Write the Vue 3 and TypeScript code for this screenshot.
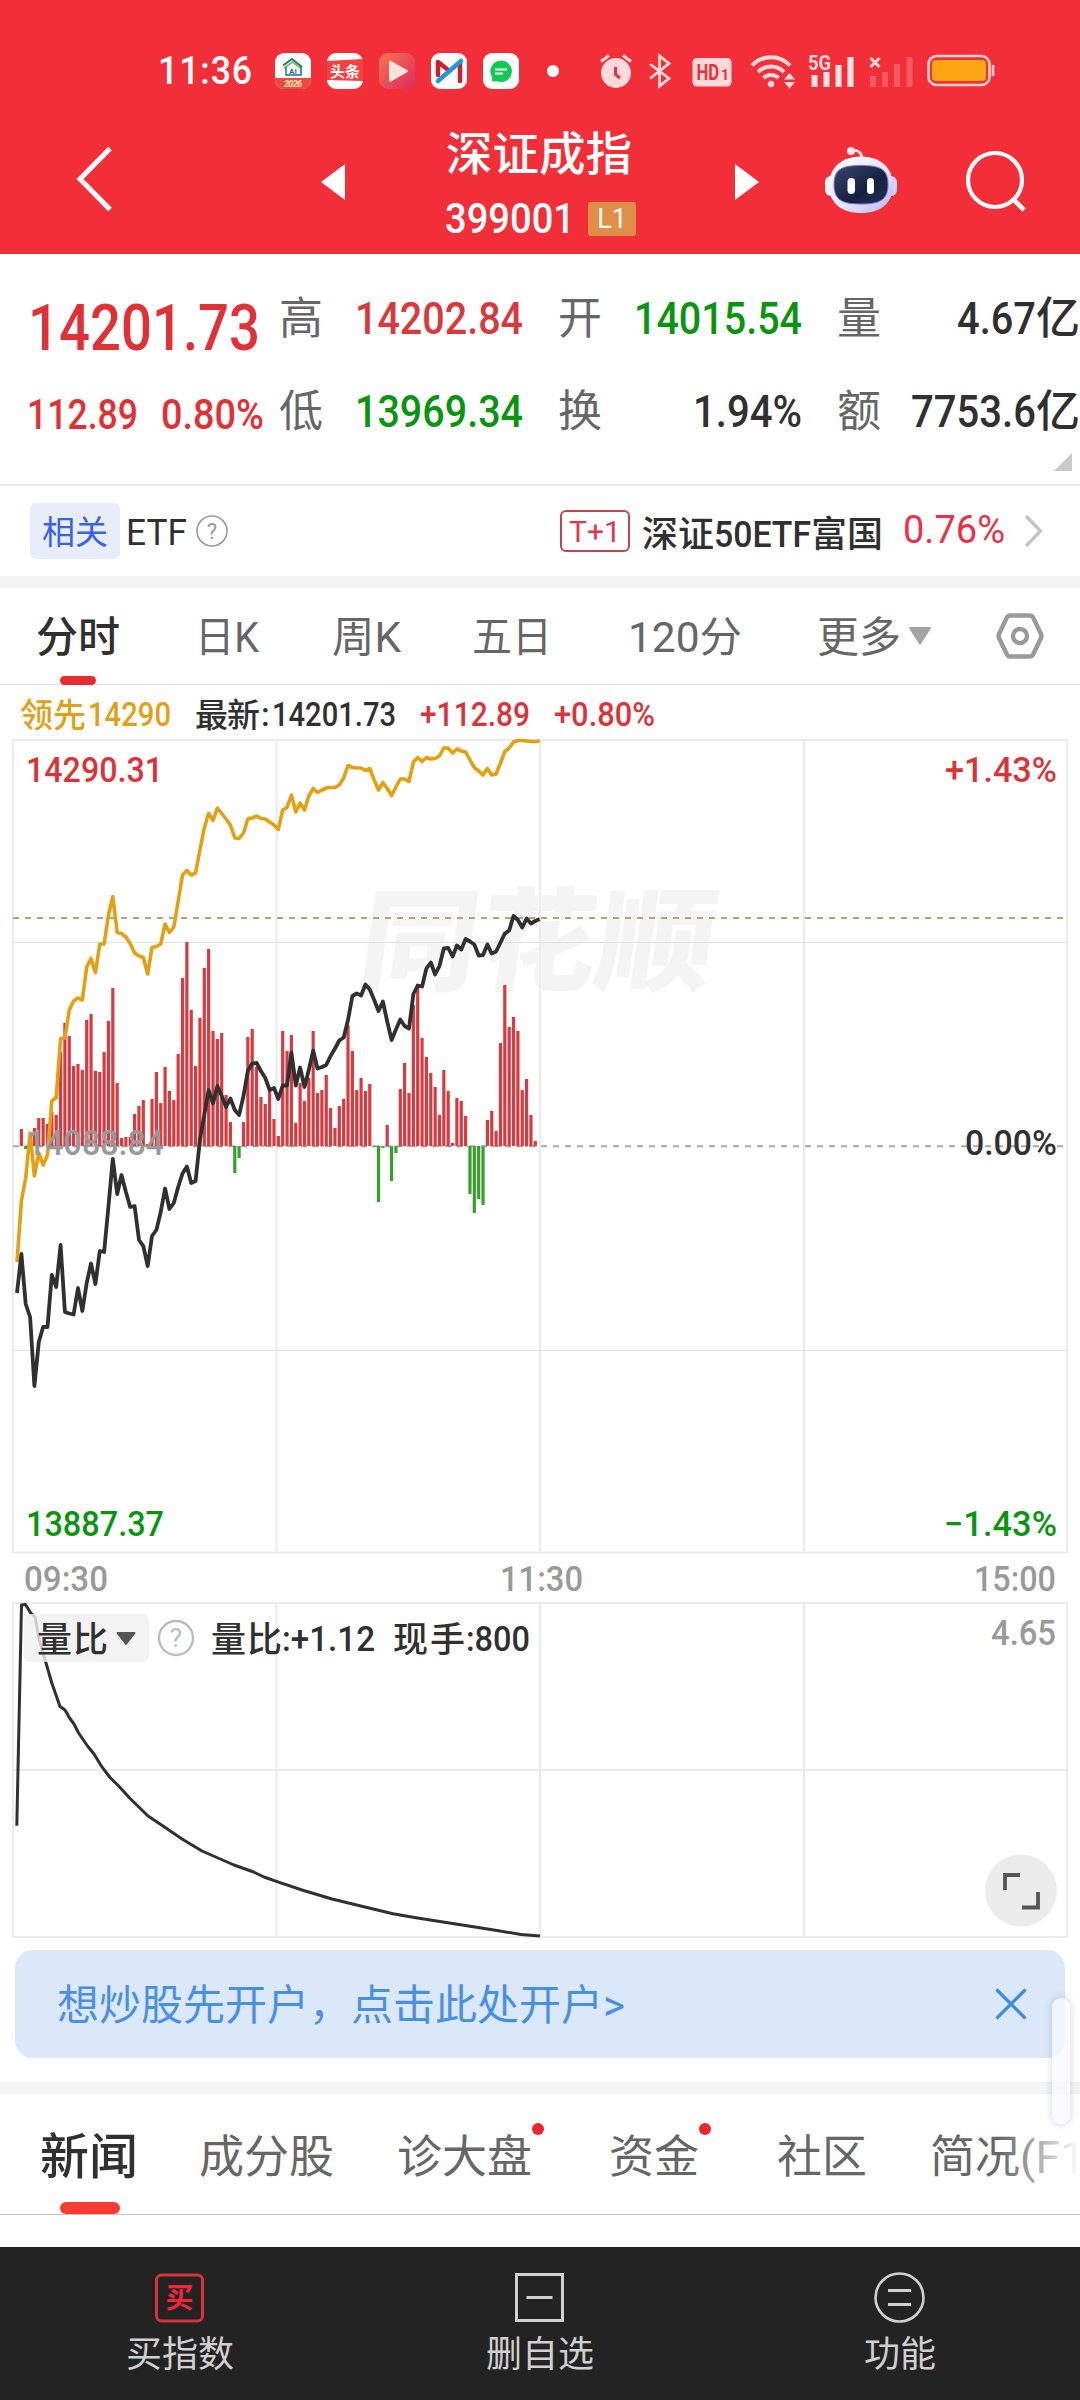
<script setup lang="ts">
import type { Directive } from 'vue'

// Squeezes a run of text horizontally so that it takes exactly the given width.
const vFit: Directive<HTMLElement, number> = {
  mounted(el, { value }) {
    const natural = el.getBoundingClientRect().width
    el.style.transform = `scaleX(${value / natural})`
    el.style.marginRight = `${value - natural}px`
  },
}

interface Quote {
  label: string
  value: string
  unit?: string
  tone: string
  width: number
}

const quotes: Quote[] = [
  { label: '高', value: '14202.84', tone: 'up', width: 168 },
  { label: '开', value: '14015.54', tone: 'down', width: 168 },
  { label: '量', value: '4.67', unit: '亿', tone: 'flat', width: 79 },
  { label: '低', value: '13969.34', tone: 'down', width: 168 },
  { label: '换', value: '1.94%', tone: 'flat', width: 109 },
  { label: '额', value: '7753.6', unit: '亿', tone: 'flat', width: 125 },
]

const periods = [
  { text: '日K', width: 64, cls: 'p-day' },
  { text: '周K', width: 69, cls: 'p-week' },
  { text: '五日', width: 80, cls: 'p-five' },
  { text: '120分', width: 114, cls: 'p-120' },
]

const step = 4.3555
const x0 = 17
const base = 1146

const lead: number[] = [
  1262, 1201, 1178, 1133, 1176, 1153, 1165, 1155, 1101, 1097.5, 1038.5, 1038, 1010, 1001, 998, 1000, 967, 958.5, 972.5, 944,
  944, 915, 896.5, 932.5, 933.5, 937, 943.5, 953, 956, 957.5, 974, 947.5, 946.5, 944, 924, 932.5, 927, 901, 875, 870.5,
  875, 873, 850, 828, 813.5, 820.5, 808, 813.5, 819, 825, 838, 838.5, 833, 819, 818, 816, 818.5, 819, 822, 825,
  829.5, 810, 807.5, 795, 812, 803, 810, 796, 788.5, 792.5, 790, 788, 787.5, 787.5, 785, 778, 765.5, 767.5, 768, 768,
  770.5, 768.5, 780, 790, 782.5, 788.5, 795.5, 787, 779, 779, 781.5, 762, 757.5, 761.5, 757.5, 759, 758.5, 756, 748, 748,
  753, 749, 751, 752, 760, 767.5, 771, 775, 768.5, 775, 774, 763, 751.5, 748, 742, 740.5, 740.5, 741, 741.5, 741.5, 741,
]

const price: number[] = [
  1293, 1254, 1304, 1317, 1386, 1342, 1327, 1327, 1275, 1287, 1245, 1312, 1313.5, 1314.5, 1288, 1311, 1283, 1263.5, 1284, 1251,
  1252, 1206, 1159, 1194, 1175, 1192, 1207, 1206, 1240, 1246, 1266, 1236, 1230, 1212, 1188.5, 1209, 1203, 1187, 1173.5, 1166.5,
  1183, 1181, 1140, 1115, 1090, 1103.5, 1086, 1096, 1107, 1098.5, 1110, 1115, 1096, 1071, 1063.5, 1063, 1071, 1078, 1090, 1088,
  1099, 1085.5, 1085.5, 1052.5, 1085.5, 1067.5, 1087, 1070, 1050.5, 1068.5, 1067, 1065, 1056, 1048.5, 1040.5, 1037.5, 1020, 996, 993.5, 995.5,
  984.5, 989.5, 1000, 1011, 1001.5, 1021.5, 1040, 1029.5, 1019.5, 1026, 1028.5, 994, 985.5, 986.5, 968.5, 962.5, 974.5, 966, 948.5, 948,
  956.5, 945.5, 949.5, 939, 941.5, 944.5, 955.5, 955, 944.5, 953.5, 951.5, 942.5, 933.5, 930.5, 916, 920, 927.5, 918.5, 923.5, 921, 919,
]

const force: number[] = [
  0, 17, -3, 4, 18, 28, 28, 22, 34, 31, 94, 123, 110, 80, 82, 76, 126, 132, 75, 74,
  94, 125, 158, 63, 8, 9, 9, 32, 40, 46, 2, 47, 74, 43, 79, 55, 46, 92, 168, 204,
  136, 80, 128, 178, 197, 115, 107, 113, 51, 24, -27, -12, 24, 109, 117, 79, 49, 42, 58, 27,
  10, 115, 95, 111, 23, 63, 45, 68, 115, 53, 56, 71, 38, 18, 40, 47, 121, 95, 56, 68,
  55, 62, -1, -56, -2, 21, -35, -7, 57, 83, 53, 141, 162, 108, 89, 73, 59, 31, 76, 55,
  3, 48, 45, 30, -48, -67, -53, -59, 26, 35, 15, 103, 161, 119, 129, 115, 56, 67, 31, 5,
]

const toPoints = (ys: number[]) => ys.map((y, i) => `${(x0 + i * step).toFixed(1)},${y}`).join(' ')
const leadPoints = toPoints(lead)
const pricePoints = toPoints(price)

const bars = force.map((v, i) => ({
  x: x0 + i * step - 1.6,
  y: v > 0 ? base - v : base,
  h: Math.abs(v),
  up: v > 0,
}))

const ratioPoints =
  '16.8,1825.7 21.5,1605 25.5,1604.5 30.7,1613 35,1617 39.3,1640 45.7,1662 51.8,1683 60,1706.5 65,1710 69.6,1718 74,1724 78.6,1733 87.5,1746 94,1754 101.8,1766.7 109.6,1777 119.6,1787 129.6,1798 148,1816 166,1828 182,1839 202,1851 218,1858 234,1865 253.6,1872 264,1877 280,1882.7 302,1890 332,1899 368,1907.7 393,1913.7 416,1917.7 443,1922 475,1927 500,1931 521,1934.5 540,1936'
</script>

<template>
  <div class="screen">
    <header class="top">
      <div class="status">
        <span v-fit="95" class="clock">11:36</span>
        <div class="apps">
          <svg width="36" height="36" viewBox="0 0 36 36">
            <defs><clipPath id="r"><rect width="36" height="36" rx="9" /></clipPath></defs>
            <g clip-path="url(#r)">
              <rect width="36" height="36" fill="#fff" />
              <rect y="25" width="36" height="11" fill="#f04a3c" />
              <path d="M8 12.500L17 6l10 8" fill="none" stroke="#1f7a8c" stroke-width="2" />
              <path d="M9 15l8.500-6 9 7" fill="none" stroke="#8cc152" stroke-width="2" />
              <path d="M11 14v8h15v-8" fill="none" stroke="#1d6fa5" stroke-width="1.500" />
              <text x="14" y="20.500" font-size="8" font-weight="700" fill="#1d6fa5">AI</text>
              <text x="9" y="34" font-size="9" font-weight="700" font-style="italic" fill="#ffe9b8" textLength="18">2026</text>
            </g>
          </svg>
          <svg width="36" height="36" viewBox="0 0 36 36">
            <rect width="36" height="36" rx="9" fill="#fff" />
            <path d="M0 8l36-2v22l-36-1z" fill="#f5403f" />
            <text x="3" y="23.500" font-size="15" font-weight="700" fill="#fff" textLength="30">头条</text>
          </svg>
          <svg width="36" height="36" viewBox="0 0 36 36">
            <defs>
              <linearGradient id="vid" x1="0" y1="0" x2="1" y2="1">
                <stop offset="0" stop-color="#f9744c" />
                <stop offset="1" stop-color="#dc2a63" />
              </linearGradient>
            </defs>
            <rect width="36" height="36" rx="9" fill="url(#vid)" />
            <path d="M11 8.500v19.500l17-9.800z" fill="#fde3dc" stroke="#fde3dc" stroke-width="2" stroke-linejoin="round" />
          </svg>
          <svg width="36" height="36" viewBox="0 0 36 36">
            <rect width="36" height="36" rx="9" fill="#fff" />
            <path d="M7 22V9l9 7M29 10v18" fill="none" stroke="#c8202f" stroke-width="4.500" stroke-linecap="round" stroke-linejoin="round" />
            <path d="M7 28L30 8" stroke="#1f9ad8" stroke-width="4.500" stroke-linecap="round" />
          </svg>
          <svg width="36" height="36" viewBox="0 0 36 36">
            <rect width="36" height="36" rx="9" fill="#fff" />
            <path d="M18 7.500a10.800 10.800 0 1 1-4 20.800l-5 .2v-4.500A10.800 10.800 0 0 1 18 7.500z" fill="#0fca57" />
            <path d="M12 16.500h12M12 20.500h8" stroke="#fff" stroke-width="2" />
          </svg>
        </div>
        <i class="more-dot"></i>
        <div class="signals">
          <svg class="s-alarm" width="34" height="36" viewBox="0 0 34 36">
            <circle cx="17" cy="20" r="15" fill="#fdd9db" />
            <path d="M2 8.500l8-6M32 8.500l-8-6" stroke="#fdd9db" stroke-width="3.200" />
            <path d="M16.500 14v7.500l4.500 3.500" fill="none" stroke="#e5323b" stroke-width="3" />
          </svg>
          <svg class="s-bt" width="24" height="36" viewBox="0 0 24 36">
            <path d="M2 11l19 14.500-9.500 7.500V3L21 10.500 2 25.500" fill="none" stroke="#fdd9db" stroke-width="2.800" />
          </svg>
          <svg class="s-hd" width="40" height="30" viewBox="0 0 40 30">
            <rect x=".5" y="1" width="39" height="28.500" rx="4.500" fill="#fdd9db" />
            <text transform="translate(4.500 23) scale(.76 1)" font-size="22" font-weight="700" fill="#e5323b">HD</text>
            <text x="29" y="23" font-size="14" font-weight="700" fill="#e5323b">1</text>
          </svg>
          <svg class="s-wifi" width="46" height="36" viewBox="0 0 46 36">
            <g fill="none" stroke="#fdd9db" stroke-width="4">
              <path d="M2 12.500a26 26 0 0 1 38 0" />
              <path d="M8 19a18 18 0 0 1 26 0" />
              <path d="M13.500 25a10.800 10.800 0 0 1 15 0" />
            </g>
            <circle cx="21" cy="31" r="3.200" fill="#fdd9db" />
            <path d="M34 26.500l5.500-6.500 5.500 6.500zM34 29l5.500 6.500 5.500-6.500z" fill="#fdd9db" />
          </svg>
          <svg class="s-5g" width="48" height="40" viewBox="0 -4 48 40">
            <text x="0" y="17" font-size="21" font-weight="700" fill="#fdd9db" textLength="23" lengthAdjust="spacingAndGlyphs">5G</text>
            <path d="M6.500 22v12M18.500 19v15M30.500 12v22M42.500 4v30" stroke="#fde3e4" stroke-width="6" />
          </svg>
          <svg class="s-none" width="46" height="36" viewBox="0 0 46 36">
            <path d="M1.500 5l9 9M10.500 5l-9 9" stroke="#fdd9db" stroke-width="3" />
            <path d="M4 23v11M16 19v15M28 11v23M40.500 4v30" stroke="#f95a62" stroke-width="6" />
          </svg>
          <svg class="s-bat" width="68" height="34" viewBox="0 0 68 34">
            <rect x="1.500" y="2" width="61" height="29" rx="8" fill="none" stroke="#fdd0d3" stroke-width="2.600" />
            <rect x="5" y="6" width="54" height="21" rx="4" fill="#fea513" />
            <path d="M66 11v11" stroke="#fdd0d3" stroke-width="2.600" />
          </svg>
        </div>
      </div>

      <div class="nav">
        <svg class="n-back" width="40" height="68" viewBox="0 0 40 68">
          <path d="M35 3.500L5 34l30 30.500" fill="none" stroke="#fff" stroke-width="5" />
        </svg>
        <svg class="n-prev" width="24" height="36" viewBox="0 0 24 36"><path d="M24 0v36L0 18z" fill="#fff" /></svg>
        <div class="title">
          <span v-fit="186" class="name">深证成指</span>
          <div class="code">
            <span v-fit="130" class="num">399001</span>
            <span class="level">L1</span>
          </div>
        </div>
        <svg class="n-next" width="24" height="36" viewBox="0 0 24 36"><path d="M0 0v36l24-18z" fill="#fff" /></svg>
        <svg class="n-bot" width="72" height="70" viewBox="0 0 72 70">
          <defs>
            <linearGradient id="shell" x1="0" y1="0" x2="1" y2="1">
              <stop offset="0" stop-color="#fff" />
              <stop offset=".55" stop-color="#e4e6fb" />
              <stop offset="1" stop-color="#b9b6ee" />
            </linearGradient>
            <linearGradient id="face" x1="0" y1="0" x2="1" y2="1">
              <stop offset="0" stop-color="#38476d" />
              <stop offset=".6" stop-color="#16213f" />
              <stop offset="1" stop-color="#22305a" />
            </linearGradient>
          </defs>
          <path d="M26 6c7-2 11 2 11 8" fill="none" stroke="#f3dfe6" stroke-width="2.800" />
          <circle cx="26" cy="6" r="4" fill="#fbe6ea" />
          <rect x="0" y="31" width="12" height="20" rx="6" fill="#eef0fd" />
          <rect x="60" y="31" width="12" height="20" rx="6" fill="#c9d2f8" />
          <path d="M36 11.500c19 0 32 11 32 29S55 68 36 68 4 58.500 4 40.500s13-29 32-29z" fill="url(#shell)" />
          <path d="M36 20.500c19 0 27 3.500 27 19S55 59 36 59 9 55 9 39.500s8-19 27-19z" fill="url(#face)" stroke="#8a6be0" stroke-width="1" />
          <rect x="22.500" y="33" width="7.500" height="16" rx="3.700" fill="#fff" />
          <rect x="42" y="33" width="7" height="16" rx="3.500" fill="#fff" />
        </svg>
        <svg class="n-find" width="64" height="64" viewBox="0 0 64 64">
          <circle cx="30" cy="30" r="27" fill="none" stroke="#fff" stroke-width="4.200" />
          <path d="M48.500 49.500L59 60" stroke="#fff" stroke-width="4.600" />
        </svg>
      </div>
    </header>

    <section class="quote">
      <div class="latest">
        <span v-fit="232" class="big">14201.73</span>
        <div class="change">
          <span v-fit="111">112.89</span>
          <span v-fit="103">0.80%</span>
        </div>
      </div>
      <div class="stats">
        <div v-for="q in quotes" :key="q.label" class="stat">
          <span class="label">{{ q.label }}</span>
          <span class="value" :class="q.tone"><span v-fit="q.width" class="fit">{{ q.value }}</span>{{ q.unit }}</span>
        </div>
      </div>
      <i class="fold"></i>
    </section>

    <section class="related">
      <span class="tag">相关</span>
      <span v-fit="61" class="etf">ETF</span>
      <svg class="help" width="32" height="32" viewBox="0 0 32 32">
        <circle cx="16" cy="16" r="15" fill="none" stroke="#999" stroke-width="1.600" />
        <text x="16" y="23.500" font-size="22" text-anchor="middle" fill="#999">?</text>
      </svg>
      <span class="t1">T+1</span>
      <span class="fund">深证<span v-fit="97" class="fit">50ETF</span>富国</span>
      <span v-fit="102" class="pct">0.76%</span>
      <svg class="go" width="20" height="34" viewBox="0 0 20 34"><path d="M2 2l14.500 15L2 32" fill="none" stroke="#c4c4c4" stroke-width="3.400" /></svg>
    </section>

    <nav class="periods">
      <span class="on">分时</span>
      <span v-for="p in periods" :key="p.text" :class="p.cls"><span v-fit="p.width" class="fit">{{ p.text }}</span></span>
      <span class="p-more">更多</span>
      <svg class="caret" width="24" height="20" viewBox="0 0 24 20"><path d="M2 2h20L12 17.500z" fill="#a3a3a3" stroke="#a3a3a3" stroke-width="2" stroke-linejoin="round" /></svg>
      <svg class="gear" width="50" height="50" viewBox="0 0 50 50">
        <path d="M14.500 4.500h21q1.500 0 2.300 1.400L46 23q.8 2 0 4L37.800 44q-.8 1.500-2.300 1.500h-21q-1.500 0-2.300-1.500L4 27q-.8-2 0-4l8.200-17.100q.8-1.400 2.300-1.400z" fill="none" stroke="#999" stroke-width="4.400" />
        <circle cx="25" cy="25" r="7" fill="none" stroke="#999" stroke-width="4.400" />
      </svg>
    </nav>

    <svg class="chart" width="1080" height="1258" viewBox="0 685 1080 1258">
      <g class="info">
        <text x="20" y="727" class="gold" textLength="66">领先</text>
        <text x="88" y="726" class="gold" textLength="83" lengthAdjust="spacingAndGlyphs">14290</text>
        <text x="195" y="727" textLength="65">最新</text>
        <text x="261" y="726">:</text>
        <text x="272" y="726" textLength="124" lengthAdjust="spacingAndGlyphs">14201.73</text>
        <text x="420" y="726" class="red" textLength="110" lengthAdjust="spacingAndGlyphs">+112.89</text>
        <text x="554" y="726" class="red" textLength="101" lengthAdjust="spacingAndGlyphs">+0.80%</text>
      </g>

      <text class="mark" transform="translate(355 982) skewX(-8)" textLength="355" lengthAdjust="spacingAndGlyphs">同花顺</text>

      <g class="grid">
        <rect x="13" y="740" width="1054" height="812.500" />
        <path d="M276.500 740v812.500M540 740v812.500M804 740v812.500" />
        <path class="hair" d="M13 942.500h1054M13 1350.500h1054" />
        <rect x="13" y="1603" width="1054" height="334" />
        <path d="M276.500 1603v334M540 1603v334M804 1603v334M13 1770h1054" />
      </g>
      <path d="M13 918h1054" stroke="#bda078" stroke-width="2" stroke-dasharray="6 6" />
      <path d="M13 1146.200h1054" stroke="#a6aaa6" stroke-width="2" stroke-dasharray="6 6" />

      <rect v-for="(b, i) in bars" :key="i" :x="b.x" :y="b.y" width="3.200" :height="b.h" :fill="b.up ? '#d83a3f' : '#37a02a'" />
      <path d="M40 1146.500h500" stroke="#9a9a9a" stroke-width="1.600" stroke-dasharray="3.500 5" opacity=".7" />
      <polyline :points="leadPoints" fill="none" stroke="#e2a012" stroke-width="3.600" stroke-linejoin="round" />
      <polyline :points="pricePoints" fill="none" stroke="#303030" stroke-width="3.800" stroke-linejoin="round" />

      <g class="axis">
        <text x="26" y="782" class="red" textLength="137" lengthAdjust="spacingAndGlyphs">14290.31</text>
        <text x="945" y="782" class="red" textLength="112" lengthAdjust="spacingAndGlyphs">+1.43%</text>
        <text x="27" y="1155" class="gray" textLength="137" lengthAdjust="spacingAndGlyphs">14088.84</text>
        <text x="965" y="1155" textLength="92" lengthAdjust="spacingAndGlyphs">0.00%</text>
        <text x="26" y="1536" class="green" textLength="138" lengthAdjust="spacingAndGlyphs">13887.37</text>
        <text x="944" y="1536" class="green" textLength="113" lengthAdjust="spacingAndGlyphs">−1.43%</text>
        <g class="gray">
          <text x="24" y="1591" textLength="84" lengthAdjust="spacingAndGlyphs">09:30</text>
          <text x="500" y="1591" textLength="83" lengthAdjust="spacingAndGlyphs">11:30</text>
          <text x="974" y="1591" textLength="82" lengthAdjust="spacingAndGlyphs">15:00</text>
          <text x="991" y="1645" textLength="65" lengthAdjust="spacingAndGlyphs">4.65</text>
        </g>
      </g>

      <polyline :points="ratioPoints" fill="none" stroke="#303030" stroke-width="3" stroke-linejoin="round" />
      <rect x="24" y="1614" width="125" height="48" rx="5" fill="#f0f0f0" fill-opacity=".82" />
      <g class="ratio">
        <text x="37" y="1652" textLength="71">量比</text>
        <path d="M117.500 1633h17l-8.500 11z" fill="#555" stroke="#555" stroke-width="2" stroke-linejoin="round" />
        <circle cx="176" cy="1638" r="17" fill="none" stroke="#bcbcbc" stroke-width="2.400" />
        <text x="176" y="1647" text-anchor="middle" class="q">?</text>
        <text x="211" y="1652" textLength="71">量比</text>
        <text x="282" y="1651" textLength="93" lengthAdjust="spacingAndGlyphs">:+1.12</text>
        <text x="393" y="1652" textLength="72">现手</text>
        <text x="466" y="1651" textLength="64" lengthAdjust="spacingAndGlyphs">:800</text>
      </g>
      <circle cx="1021" cy="1890.500" r="36" fill="#ececec" />
      <path d="M1005 1890v-15h15M1038 1892v15.500h-16" fill="none" stroke="#555" stroke-width="3.800" />
    </svg>

    <aside class="banner">
      <span>想炒股先开户，点击此处开户&gt;</span>
      <svg width="32" height="32" viewBox="0 0 32 32"><path d="M1.500 1.500l29 29M30.500 1.500l-29 29" stroke="#3f8ae2" stroke-width="3.200" /></svg>
      <i class="handle"></i>
    </aside>

    <nav class="sections">
      <span class="on">新闻</span>
      <span class="s-parts">成分股</span>
      <span class="s-diag dot">诊大盘</span>
      <span class="s-funds dot">资金</span>
      <span class="s-club">社区</span>
      <span class="s-brief">简况(F10)</span>
    </nav>

    <footer class="actions">
      <div class="action">
        <svg width="52" height="52" viewBox="0 0 52 52">
          <rect x="2.500" y="3" width="46" height="46" rx="5" fill="none" stroke="#d8323c" stroke-width="3" />
          <text x="25.500" y="36" font-size="28" font-weight="700" text-anchor="middle" fill="#f0263c">买</text>
        </svg>
        <span>买指数</span>
      </div>
      <div class="action">
        <svg width="52" height="52" viewBox="0 0 52 52">
          <path d="M2.500 2.500h46v46h-46zM12.500 25.500h26" fill="none" stroke="#d0d0d0" stroke-width="3" />
        </svg>
        <span>删自选</span>
      </div>
      <div class="action">
        <svg width="52" height="52" viewBox="0 0 52 52">
          <circle cx="25.500" cy="25.500" r="24" fill="none" stroke="#d0d0d0" stroke-width="2.600" />
          <path d="M14 18.500h23M14 32.500h23" stroke="#d0d0d0" stroke-width="3" />
        </svg>
        <span>功能</span>
      </div>
    </footer>
  </div>
</template>

<style>
body {
  background: #fff;
}
</style>

<style scoped>
.screen {
  width: 1080px;
  height: 2400px;
  overflow: hidden;
  background: #fff;
  color: #303030;
  font-family: Roboto, 'Noto Sans CJK SC', sans-serif;
  white-space: nowrap;
  display: flex;
  flex-direction: column;
}
.screen > * {
  flex: none;
  box-sizing: border-box;
}
svg {
  display: block;
  flex: none;
}
span {
  transform-origin: left center;
}
.fit {
  display: inline-block;
}

/* header */
.top {
  height: 254px;
  background: #f22f38;
  color: #fff;
}
.status {
  height: 110px;
  padding: 32px 0 0 158px;
  box-sizing: border-box;
  display: flex;
  align-items: center;
}
.clock {
  font-size: 38px;
  font-weight: 500;
  letter-spacing: 1px;
}
.apps {
  display: flex;
  gap: 16px;
  margin-left: 22px;
}
.more-dot {
  width: 12px;
  height: 12px;
  border-radius: 50%;
  background: #fff;
  margin: 0 40px 0 28px;
}
.signals {
  display: flex;
  align-items: center;
  margin-top: -1px;
}
.s-bt { margin-left: 15px; }
.s-hd { margin: 2px 0 0 20px; }
.s-wifi { margin-left: 18px; }
.s-5g { margin: -4px 0 0 12px; }
.s-none { margin-left: 13px; }
.s-bat { margin-left: 12px; }
.nav {
  height: 144px;
  display: flex;
}
.n-back { margin: 35px 0 0 75px; }
.n-prev { margin: 54px 0 0 206px; }
.title {
  margin-left: 100px;
  width: 192px;
}
.name {
  display: inline-block;
  margin: 14px 0 0 1px;
  font-size: 46px;
  line-height: 60px;
  font-weight: 500;
}
.code {
  display: flex;
  align-items: center;
  height: 50px;
  margin-top: 10px;
}
.num {
  font-size: 42px;
  font-weight: 500;
  line-height: 50px;
}
.level {
  width: 48px;
  height: 34px;
  margin-left: 13px;
  border-radius: 3px;
  background: #e18f46;
  font-size: 27px;
  line-height: 34px;
  text-align: center;
}
.n-next { margin: 54px 0 0 98px; }
.n-bot { margin: 35px 0 0 66px; }
.n-find { margin: 40px 0 0 68px; }

/* quote */
.quote {
  height: 232px;
  display: flex;
  position: relative;
  border-bottom: 2px solid #ebebeb;
  font-weight: 500;
}
.latest {
  width: 279px;
  padding: 35px 0 0 27px;
  box-sizing: border-box;
  color: #e13136;
}
.big {
  display: inline-block;
  margin-left: 1px;
  font-size: 64px;
  line-height: 80px;
}
.change {
  display: flex;
  gap: 23px;
  margin-top: 16px;
  font-size: 42px;
  line-height: 60px;
}
.stats {
  display: grid;
  grid-template-columns: 244px 244px 243px;
  grid-template-rows: 93px 93px;
  column-gap: 35px;
  padding-top: 19px;
  font-size: 44px;
  line-height: 93px;
}
.stat {
  display: flex;
  justify-content: space-between;
}
.label {
  font-weight: 400;
  color: #666;
}
.up { color: #d9383c; }
.down { color: #0a9410; }
.fold {
  position: absolute;
  right: 8px;
  bottom: 13px;
  border-left: 18px solid transparent;
  border-bottom: 18px solid #c9c9c9;
}

/* related fund */
.related {
  height: 102px;
  padding: 0 36px 0 30px;
  display: flex;
  align-items: center;
  border-bottom: 12px solid #f4f4f4;
}
.tag {
  width: 90px;
  height: 56px;
  border-radius: 6px;
  background: #e8edfc;
  color: #3a62e2;
  font-size: 33px;
  line-height: 59px;
  text-align: center;
}
.etf {
  margin: 3px 0 0 6px;
  font-size: 36px;
}
.help { margin-left: 9px; }
.t1 {
  width: 70px;
  height: 42px;
  margin-left: auto;
  box-sizing: border-box;
  border: 2px solid #c04450;
  border-radius: 6px;
  color: #e6344a;
  font-size: 30px;
  line-height: 39px;
  text-align: center;
}
.fund {
  margin-left: 12px;
  font-size: 36px;
  font-weight: 500;
}
.pct {
  margin: -2px 0 0 20px;
  font-size: 39px;
  color: #ea3147;
}
.go { margin-left: 19px; }

/* period tabs */
.periods {
  height: 97px;
  display: flex;
  align-items: center;
  padding-left: 36px;
  border-bottom: 1px solid #e2e2e2;
  font-size: 42px;
  color: #666;
  line-height: 96px;
}
.periods > span {
  padding-top: 3px;
}
.periods .on,
.sections .on {
  position: relative;
  color: #303030;
  font-weight: 500;
}
.periods .on::after {
  content: '';
  position: absolute;
  left: 24px;
  bottom: 1px;
  width: 36px;
  height: 9px;
  border-radius: 5px;
  background: #e92b2f;
}
.p-day { margin-left: 75px; }
.p-week { margin-left: 73px; }
.p-five { margin-left: 71px; }
.p-120 { margin-left: 76px; }
.p-more { margin-left: 75px; }
.caret { margin-left: 7px; }
.gear { margin-left: 63px; }

/* chart */
.info text {
  font-size: 33px;
  font-weight: 500;
}
.axis text {
  font-size: 35px;
  font-weight: 500;
}
.ratio text {
  font-size: 35px;
  font-weight: 500;
}
.ratio text.q {
  font-size: 26px;
  font-weight: 400;
  fill: #bcbcbc;
}
.chart text { fill: #303030; }
.chart .red { fill: #da3439; }
.chart .green { fill: #0a9410; }
.chart .gold { fill: #e0a018; }
.chart .gray,
.chart .gray text { fill: #999; }
.chart .mark {
  font-size: 112px;
  font-weight: 900;
  fill: #f4f4f4;
}
.grid {
  fill: none;
  stroke: #ebebeb;
  stroke-width: 2;
}
.hair {
  stroke: #e2e2e2;
  stroke-width: 1;
}

/* banner */
.banner {
  position: relative;
  z-index: 2;
  height: 108px;
  margin: 7px 15px 24px;
  padding: 0 38px 0 42px;
  border-radius: 18px;
  background: #dae8fa;
  display: flex;
  align-items: center;
  justify-content: space-between;
  font-size: 42px;
  line-height: 112px;
  color: #4a90e2;
}
.banner span {
  height: 108px;
}
.handle {
  position: absolute;
  left: 1037px;
  top: 48px;
  width: 18px;
  height: 126px;
  border-radius: 9px;
  background: rgba(250, 250, 255, 0.75);
  box-shadow: 0 0 6px 2px rgba(120, 130, 150, 0.22);
}

/* section tabs */
.sections {
  position: relative;
  height: 133px;
  padding-left: 40px;
  border-top: 12px solid #f4f4f4;
  border-bottom: 1px solid #c4c4c4;
  display: flex;
  font-size: 45px;
  line-height: 127px;
  color: #666;
  overflow: hidden;
}
.sections .on {
  height: 120px;
  font-size: 49px;
}
.sections .on::after {
  content: '';
  position: absolute;
  left: 20px;
  bottom: 0;
  width: 60px;
  height: 12px;
  border-radius: 6px;
  background: #fa3a35;
}
.sections::after {
  content: '';
  position: absolute;
  right: 0;
  top: 0;
  width: 80px;
  height: 119px;
  background: linear-gradient(90deg, rgba(255, 255, 255, 0), #fff);
}
.s-parts { margin-left: 61px; }
.s-diag { margin-left: 63px; }
.s-funds { margin-left: 77px; }
.s-club { margin-left: 78px; }
.s-brief { margin-left: 63px; }
.dot {
  position: relative;
}
.dot::after {
  content: '';
  position: absolute;
  right: -12px;
  top: 29px;
  width: 12px;
  height: 12px;
  border-radius: 50%;
  background: #ec262d;
}

/* footer */
.actions {
  margin-top: 32px;
  height: 153px;
  background: #232323;
  display: flex;
  color: #d0d0d0;
  font-size: 36px;
}
.action {
  flex: 1;
  display: flex;
  flex-direction: column;
  align-items: center;
  padding-top: 25px;
  line-height: 62px;
}
</style>
